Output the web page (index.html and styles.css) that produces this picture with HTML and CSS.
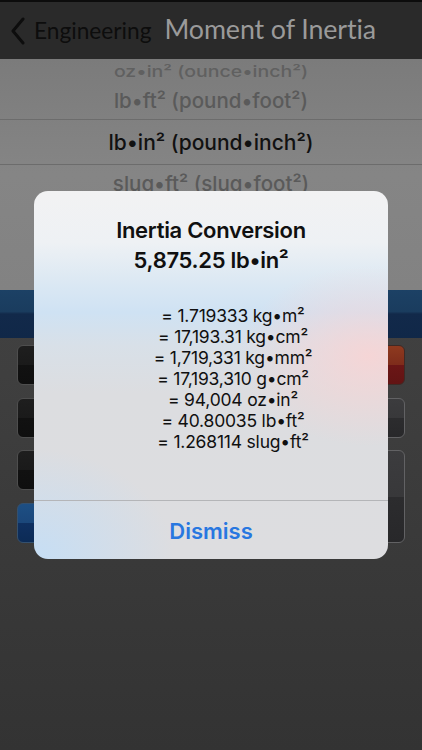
FILE: index.html
```html
<!DOCTYPE html>
<html>
<head>
<meta charset="utf-8">
<link rel="stylesheet" href="styles.css">
</head>
<body>
<div class="screen">
  <header class="nav">
    <div class="back">
      <svg class="chev" width="16" height="28" viewBox="0 0 16 28"><path d="M13 2 L3 14 L13 26" fill="none" stroke="#0d0d0d" stroke-width="3" stroke-linecap="round" stroke-linejoin="round"/></svg>
      <span class="back-label">Engineering</span>
    </div>
    <h1 class="title">Moment of Inertia</h1>
  </header>
  <section class="picker">
    <div class="row r1"><span>oz•in² (ounce•inch²)</span></div>
    <div class="row r2">lb•ft² (pound•foot²)</div>
    <div class="row sel">lb•in² (pound•inch²)</div>
    <div class="row r4">slug•ft² (slug•foot²)</div>
  </section>
  <div class="bluebar"></div>
  <section class="keys">
    <div class="key dark"></div>
    <div class="key dark"></div>
    <div class="key dark"></div>
    <div class="key red"></div>
    <div class="key dark"></div>
    <div class="key dark"></div>
    <div class="key dark"></div>
    <div class="key gray"></div>
    <div class="key dark"></div>
    <div class="key dark"></div>
    <div class="key dark"></div>
    <div class="key gray tall"></div>
    <div class="key blue"></div>
    <div class="key dark"></div>
    <div class="key dark"></div>
  </section>

  <div class="alert">
    <div class="alert-body">
      <div class="alert-title">Inertia Conversion<br>5,875.25 lb•in²</div>
      <div class="results">
        <div>= 1.719333 kg•m²</div>
        <div>= 17,193.31 kg•cm²</div>
        <div>= 1,719,331 kg•mm²</div>
        <div>= 17,193,310 g•cm²</div>
        <div>= 94,004 oz•in²</div>
        <div>= 40.80035 lb•ft²</div>
        <div>= 1.268114 slug•ft²</div>
      </div>
    </div>
    <div class="alert-btn">Dismiss</div>
  </div>
</div>
</body>
</html>
```
FILE: styles.css
```css
* { box-sizing: border-box; margin: 0; padding: 0; }
html, body { width: 422px; height: 750px; overflow: hidden; }
body { font-family: Inter, "Noto Sans", sans-serif; background: #3a3a3a; }
.screen {
  position: relative;
  width: 422px;
  height: 750px;
  display: flex;
  flex-direction: column;
  background: linear-gradient(180deg, #464646 0%, #3f3f3f 50%, #333 100%);
  overflow: hidden;
}
.nav {
  height: 59px;
  flex: none;
  background: #2a2a2a;
  border-top: 2px solid #0c0c0c;
  display: flex;
  align-items: center;
  padding: 0 0 4px 10px;
  position: relative;
  z-index: 1;
}
.back { display: flex; align-items: center; gap: 8px; padding-top: 4px; }
.chev { display: block; }
.back-label {
  font-family: Lato, "Noto Sans", sans-serif;
  font-size: 22.7px;
  color: #0d0d0d;
}
.title {
  font-family: Lato, "Noto Sans", sans-serif;
  font-weight: 400;
  font-size: 26.8px;
  color: #9a9a9a;
  margin-left: 13px;
  letter-spacing: -0.1px;
}
.picker {
  height: 231px;
  flex: none;
  background: linear-gradient(180deg, #7b7b7b 0%, #858585 50%, #828282 100%);
  display: flex;
  flex-direction: column;
  font-family: Inter, "Noto Sans", sans-serif;
  font-weight: 500;
  color: #5a5a5a;
  text-align: center;
}
.row { display: flex; align-items: center; justify-content: center; flex: none; }
.r1 { height: 20px; font-size: 19.5px; align-items: flex-end; }
.r1 span { display: block; line-height: 20px; transform: scaleY(0.8); transform-origin: 50% 100%; color: #606060; }
.r2 { height: 41px; font-size: 20.5px; padding-top: 2px; border-bottom: 1px solid #6c6c6c; }
.sel { height: 45px; font-size: 21px; color: #111; border-bottom: 1px solid #6c6c6c; }
.r4 { height: 36px; font-size: 20.5px; }
.bluebar {
  height: 48px;
  flex: none;
  background: linear-gradient(180deg, #1c4165 0%, #1a3c5e 45%, #12294a 50%, #102848 100%);
}
.keys {
  display: grid;
  grid-template-columns: repeat(4, 88px);
  grid-auto-rows: 40px;
  column-gap: 12px;
  row-gap: 12.5px;
  padding: 7px 17px 0;
}
.key { border-radius: 6px; border: 1px solid #5a5a5a; }
.dark { background: linear-gradient(180deg, #1e1e1e 0%, #1a1a1a 50%, #111 51%, #0f0f0f 100%); border-color: #4e4e4e; }
.red { background: linear-gradient(180deg, #8e3a1f 0%, #7e2c1b 50%, #6b1616 51%, #621414 100%); border-color: #3e2a26; }
.gray { background: linear-gradient(180deg, #3c3c3e 0%, #38383a 50%, #2c2c2e 51%, #28282a 100%); border-color: #626264; }
.tall { grid-row: span 2; }
.blue { background: linear-gradient(180deg, #1d4f84 0%, #1b477a 50%, #0f3060 51%, #0c2b56 100%); border-color: #34506e; }

.alert {
  position: absolute;
  left: 34px;
  top: 191px;
  width: 354px;
  height: 368px;
  border-radius: 14px;
  overflow: hidden;
  display: flex;
  flex-direction: column;
  z-index: 2;
  background:
    radial-gradient(ellipse 130px 90px at 335px 165px, rgba(248, 212, 212, 0.9), rgba(248, 212, 212, 0) 100%),
    radial-gradient(ellipse 140px 110px at 0px 368px, rgba(196, 222, 246, 0.95), rgba(196, 222, 246, 0) 100%),
    linear-gradient(180deg, #f2f2f3 0%, #eef1f4 14%, #dbe8f3 25%, #cfe2f3 33%, #d8e0e8 42%, #dcdde0 55%, #dddde0 100%);
}
.alert-body {
  height: 310px;
  flex: none;
  padding-top: 24px;
  border-bottom: 1px solid #b4b5b8;
  text-align: center;
  color: #101010;
}
.alert-title {
  font-size: 22px;
  font-weight: 600;
  line-height: 30px;
  letter-spacing: -0.3px;
}
.results {
  margin-top: 30px;
  font-size: 17.5px;
  line-height: 21px;
  padding-left: 44px;
  letter-spacing: -0.2px;
}
.alert-btn {
  flex: 1;
  display: flex;
  align-items: center;
  justify-content: center;
  font-size: 22px;
  font-weight: 600;
  color: #2877e0;
  padding-top: 2px;
}
```
